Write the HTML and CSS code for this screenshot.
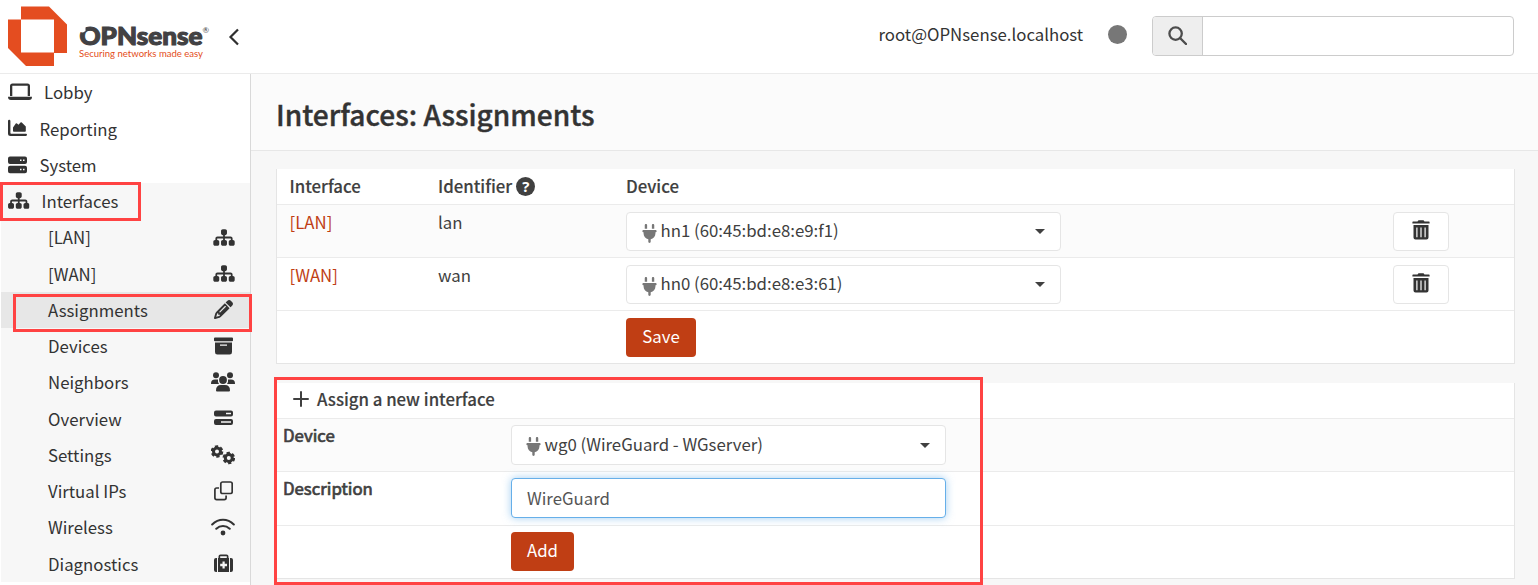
FILE: index.html
```html
<!DOCTYPE html>
<html lang="en">
<head>
<meta charset="utf-8">
<title>Interfaces: Assignments</title>
<link rel="stylesheet" href="styles.css">
</head>
<body>
<svg class="defs" aria-hidden="true">
  <symbol id="sitemap" viewBox="0 0 576 512"><path d="M208 80c0-26.5 21.5-48 48-48h64c26.5 0 48 21.5 48 48v64c0 26.5-21.5 48-48 48h-8v40H464c30.9 0 56 25.1 56 56v32h8c26.5 0 48 21.5 48 48v64c0 26.5-21.5 48-48 48H464c-26.5 0-48-21.5-48-48V368c0-26.5 21.5-48 48-48h8V288c0-4.4-3.6-8-8-8H312v40h8c26.5 0 48 21.5 48 48v64c0 26.5-21.5 48-48 48H256c-26.5 0-48-21.5-48-48V368c0-26.5 21.5-48 48-48h8V280H112c-4.4 0-8 3.6-8 8v32h8c26.5 0 48 21.5 48 48v64c0 26.5-21.5 48-48 48H48c-26.5 0-48-21.5-48-48V368c0-26.5 21.5-48 48-48h8V288c0-30.9 25.1-56 56-56H264V192h-8c-26.5 0-48-21.5-48-48V80z"/></symbol>
  <symbol id="plug" viewBox="0 0 384 512"><path d="M96 0C78.3 0 64 14.3 64 32v96h64V32c0-17.7-14.3-32-32-32zM288 0c-17.7 0-32 14.3-32 32v96h64V32c0-17.7-14.3-32-32-32zM32 160c-17.7 0-32 14.3-32 32s14.3 32 32 32v32c0 77.4 55 142 128 156.800V480c0 17.700 14.300 32 32 32s32-14.300 32-32V412.800C297 398 352 333.400 352 256V224c17.700 0 32-14.300 32-32s-14.300-32-32-32H32z"/></symbol>
  <symbol id="trash" viewBox="0 0 18 20"><path d="M5.500 1.500 6.500 .3h5l1 1.200H17q.6 0 .6.800v1.200H.4V2.300q0-.8.600-.8z"/><path fill-rule="evenodd" d="M1.500 5h15v12.500q0 2-2 2h-11q-2 0-2-2zM4.300 7.500v9.700h1.200V7.500zM8.400 7.500v9.700h1.200V7.500zM12.500 7.500v9.700h1.200V7.500z"/></symbol>
</svg>

<header class="topbar">
  <div class="brand">
    <svg class="logo" width="202" height="60" viewBox="0 0 202 60">
      <path fill="#e44d20" d="M13 .5H41L59 18.500V47H46V60H18L0 42V13.500H13z"/>
      <path fill="#fff" d="M13 13.500H46V46.500H13z"/>
      <text class="logo-name" x="71.500" y="39" textLength="123" lengthAdjust="spacingAndGlyphs">OPNsense</text>
      <path d="M69 19.500h8.500v5.500l-2.500 1.500-6-1z" fill="#fff"/>
      <text class="logo-reg" x="194.500" y="27">®</text>
      <text class="logo-tag" x="71" y="51" textLength="124" lengthAdjust="spacingAndGlyphs">Securing networks made easy</text>
    </svg>
    <svg class="collapse" width="12" height="18" viewBox="0 0 12 18"><path d="M10 1.500 2.500 9l7.500 7.500" fill="none" stroke="#2f2f2f" stroke-width="2.200"/></svg>
  </div>
  <div class="account">
    <span class="user">root@OPNsense.localhost</span>
    <span class="status"></span>
    <div class="search">
      <span class="search-btn"><svg width="19" height="19" viewBox="0 0 19 19"><circle cx="7.600" cy="7.600" r="6.200" fill="none" stroke="#4d4d4d" stroke-width="2.300"/><path d="m12 12 6 6" stroke="#4d4d4d" stroke-width="2.400" stroke-linecap="round"/></svg></span>
      <span class="search-field"></span>
    </div>
  </div>
</header>

<div class="body">
  <nav class="sidebar">
    <a class="item"><svg width="24" height="18" viewBox="0 0 24 18"><path fill-rule="evenodd" d="M2 3q0-2.500 2.500-2.500h15Q22 .5 22 3v10H2zM4.300 2.800V13h15.400V2.800zM0 13.700h24q0 3.300-3 3.300H3q-3 0-3-3.300z"/></svg><span class="gap-lg">Lobby</span></a>
    <a class="item"><svg width="19" height="18" viewBox="0 0 19 18"><path d="M0 2q0-1.200 1.200-1.200T2.400 2v12q0 .7.700.7H18q1 0 1 1.150t-1 1.150H2.500Q0 17 0 14.500zM5 8.500l2.800-4q.6-.6 1.200 0l1.500 1.300 2-2.300q.7-.6 1.300 0L17.800 7.500v4.500q0 .8-.8.800H5.800Q5 12.800 5 12z"/></svg><span class="gap-md">Reporting</span></a>
    <a class="item"><svg width="19" height="18" viewBox="0 0 19 18"><path fill-rule="evenodd" d="M2 .5h15q2 0 2 2V6q0 2-2 2H2Q0 8 0 6V2.500q0-2 2-2zM12 3.500V5h1.500V3.500zm3 0V5h1.500V3.500zM2 9.700h15q2 0 2 2v3.500q0 2-2 2H2q-2 0-2-2v-3.500q0-2 2-2zM12 12.700v1.500h1.500v-1.500zm3 0v1.500h1.500v-1.500z"/></svg><span class="gap-md">System</span></a>
    <a class="item open"><svg width="21.500" height="19" ><use href="#sitemap"/></svg><span class="gap-sm">Interfaces</span></a>
    <div class="submenu">
      <a class="sub"><span>[LAN]</span><svg width="22" height="19"><use href="#sitemap"/></svg></a>
      <a class="sub"><span>[WAN]</span><svg width="22" height="19"><use href="#sitemap"/></svg></a>
      <a class="sub active"><span>Assignments</span><svg class="narrow" width="19" height="19" viewBox="0 0 512 512"><path d="M410.300 231l11.300-11.300-33.900-33.900-62.100-62.100L291.700 89.800l-11.300 11.300-22.600 22.600L58.600 322.900c-10.400 10.400-18 23.300-22.200 37.400L1 480.700c-2.500 8.400-.2 17.500 6.100 23.700s15.300 8.500 23.700 6.100l120.300-35.400c14.100-4.200 27-11.800 37.400-22.200L387.700 253.700 410.300 231zM160 399.400l-9.100 22.700c-4 3.100-8.500 5.400-13.300 6.900L59.400 452l23-78.100c1.400-4.900 3.800-9.400 6.900-13.300l22.700-9.100v32c0 8.800 7.200 16 16 16h32zM362.700 18.700L348.300 33.200 325.700 55.800 314.300 67.100l33.900 33.900 62.100 62.100 33.900 33.900 11.300-11.300 22.600-22.600 14.500-14.500c25-25 25-65.500 0-90.500L453.300 18.700c-25-25-65.500-25-90.500 0zm-47.400 168l-144 144c-6.200 6.200-16.400 6.200-22.600 0s-6.200-16.400 0-22.600l144-144c6.200-6.200 16.400-6.200 22.600 0s6.200 16.400 0 22.600z"/></svg></a>
      <a class="sub"><span>Devices</span><svg class="narrow" width="19" height="18" viewBox="0 0 19 18"><path fill-rule="evenodd" d="M1 .5h17q1 0 1 1v2q0 .8-1 .8H1q-1 0-1-.8v-2q0-1 1-1zM1 5.500h17v9.500q0 2.500-2.300 2.500H3.300Q1 17.500 1 15zM6 7.500v1.300h7V7.500z"/></svg></a>
      <a class="sub"><span>Neighbors</span><svg width="24" height="20" viewBox="0 0 24 20"><circle cx="5" cy="3.300" r="3"/><circle cx="19" cy="3.300" r="3"/><circle cx="12" cy="8" r="3.900"/><path d="M0 11.500Q0 7.500 4 7.500h3Q6.500 10 8 12H.5q-.5 0-.5-.5zM24 11.500Q24 7.500 20 7.500h-3Q17.500 10 16 12h7.500q.5 0 .5-.5zM5 18.500q0-5.500 5-5.500h4q5 0 5 5.500 0 1-1 1H6q-1 0-1-1z"/></svg></a>
      <a class="sub"><span>Overview</span><svg class="narrow" width="19" height="16" viewBox="0 0 19 16"><path fill-rule="evenodd" d="M2 .5h15q2 0 2 2v2q0 2-2 2H2q-2 0-2-2v-2q0-2 2-2zM12 2.700v1.500h5V2.700zM2 9h15q2 0 2 2v2q0 2-2 2H2q-2 0-2-2v-2q0-2 2-2zM7 11.300v1.500h10v-1.500z"/></svg></a>
      <a class="sub"><span>Settings</span><svg width="24" height="20" viewBox="0 0 24 20"><g fill="none" stroke="#333"><circle cx="6" cy="6.500" r="3.500" stroke-width="3"/><circle cx="6" cy="6.500" r="5.100" stroke-width="2.400" stroke-dasharray="3.100 2.241"/><circle cx="17.800" cy="13" r="3.500" stroke-width="3"/><circle cx="17.800" cy="13" r="5.100" stroke-width="2.400" stroke-dasharray="3.100 2.241"/></g></svg></a>
      <a class="sub"><span>Virtual IPs</span><svg class="narrow" width="19" height="20" viewBox="0 0 19 20"><g fill="none" stroke="#333" stroke-width="1.700"><rect x="6.800" y="1" width="11.400" height="11.500" rx="1.800"/><path d="M5 7H2.700Q.9 7 .9 8.800v8Q.9 18.600 2.700 18.600h7.600q1.800 0 1.800-1.800V14.500"/></g></svg></a>
      <a class="sub"><span>Wireless</span><svg width="24" height="18" viewBox="0 0 24 18"><g fill="none" stroke="#333" stroke-width="2.100" stroke-linecap="round"><path d="M1.200 6.500Q6 1.800 12 1.800t10.800 4.700M5.300 10.700Q8.200 8 12 8t6.700 2.700"/></g><circle cx="12" cy="15" r="2.400"/></svg></a>
      <a class="sub"><span>Diagnostics</span><svg class="narrow" width="19" height="19" viewBox="0 0 19 19"><path fill-rule="evenodd" d="M4.500 4V2.500Q4.500.5 6.500.5h6q2 0 2 2V4zM6.200 4h6.600V2.200H6.200zM4 4h11v14H4zM8.500 7.500v2.300H6.200v2.400h2.300v2.300h2.200v-2.300H13V9.800h-2.300V7.500zM3 4v14H2q-2 0-2-2V6q0-2 2-2zM16 4v14h1q2 0 2-2V6q0-2-2-2z"/></svg></a>
    </div>
  </nav>

  <main class="main">
    <div class="page-head"><h1>Interfaces: Assignments</h1></div>
    <div class="content">
      <section class="card">
        <div class="row head"><span>Interface</span><span class="ident">Identifier <i class="help">?</i></span><span>Device</span></div>
        <div class="row tint"><a class="link">[LAN]</a><span>lan</span><div class="select"><svg width="15" height="19"><use href="#plug"/></svg><span>hn1 (60:45:bd:e8:e9:f1)</span><b class="caret"></b></div><span class="del"><svg width="18" height="20"><use href="#trash"/></svg></span></div>
        <div class="row"><a class="link">[WAN]</a><span>wan</span><div class="select"><svg width="15" height="19"><use href="#plug"/></svg><span>hn0 (60:45:bd:e8:e3:61)</span><b class="caret"></b></div><span class="del"><svg width="18" height="20"><use href="#trash"/></svg></span></div>
        <div class="row last"><span></span><span></span><button class="btn save">Save</button></div>
      </section>
      <section class="card form">
        <div class="row head"><svg width="16" height="16" viewBox="0 0 16 16"><path d="M8 1v14M1 8h14" stroke="#404040" stroke-width="2" stroke-linecap="round"/></svg><span class="assign">Assign a new interface</span></div>
        <div class="row tint"><strong>Device</strong><div class="select"><svg width="15" height="19"><use href="#plug"/></svg><span>wg0 (WireGuard - WGserver)</span><b class="caret"></b></div></div>
        <div class="row desc"><strong>Description</strong><div class="input">WireGuard</div></div>
        <div class="row last"><span></span><button class="btn add">Add</button></div>
      </section>
    </div>
  </main>
</div>

<div class="mark mark-menu"></div>
<div class="mark mark-assign"></div>
<div class="mark mark-form"></div>
</body>
</html>
```
FILE: styles.css
```css
* { box-sizing: border-box; }
body {
  margin: 0;
  width: 1538px;
  height: 585px;
  overflow: hidden;
  position: relative;
  background: #fff;
  color: #404040;
  font: 16.8px/24px "Noto Sans CJK SC", "Noto Sans", sans-serif;
}
svg { flex: none; fill: #333; display: block; }
.defs { width: 0; height: 0; position: absolute; }

.topbar {
  height: 74px;
  border-bottom: 1px solid #ebebeb;
  display: flex;
  justify-content: space-between;
}
.brand { display: flex; padding: 6px 0 0 8px; }
.logo { overflow: visible; }
.logo-name { font: 900 24px Lato, sans-serif; fill: #424143; stroke: #424143; stroke-width: 1.1px; }
.logo-reg { font: 8px Lato, sans-serif; fill: #424143; }
.logo-tag { font: 9.500px Lato, sans-serif; fill: #e44d20; }
.collapse { margin: 22px 0 0 18px; }
.account { display: flex; padding: 16px 24px 0 0; }
.user { padding-top: 6px; color: #333; width: 205.500px; }
.status { width: 19px; height: 19px; border-radius: 50%; background: #777; margin: 9px 25px 0 24px; }
.search { display: flex; width: 362px; height: 40px; border: 1px solid #ccc; border-radius: 4px; overflow: hidden; }
.search-btn { width: 50px; background: #eee; border-right: 1px solid #ccc; padding: 9px 0 0 15px; }
.search-field { flex: 1; }

.body { display: flex; height: 511px; }
.sidebar { width: 251px; border-right: 1px solid #d9d9d9; padding-left: 1px; color: #333; }
.item { display: flex; align-items: center; height: 36.250px; padding-left: 7px; }
.item span, .sub span { padding-top: .3px; }
.gap-lg { margin-left: 12px; }
.gap-md { margin-left: 12.500px; }
.gap-sm { margin-left: 12px; }
.open, .submenu { background: #f7f7f7; }
.submenu { height: 363px; }
.sub { display: flex; align-items: center; justify-content: space-between; height: 36.250px; padding: 0 15px 0 47px; }
.sub .narrow { margin-right: 2.500px; }
.active { background: #e7e7e7; }

.main { flex: 1; background: #f7f7f7; }
.page-head { height: 77px; background: #fbfbfb; border-bottom: 1px solid #e7e7e7; padding: 22px 0 0 25px; }
h1 { margin: 0; font-size: 28.100px; line-height: 36px; font-weight: 500; color: #333; -webkit-text-stroke: .4px #333; }
.content { padding: 18px 23px 0 25px; }
.card { height: 195px; background: #fff; border: solid #e5e5e5; border-width: 0 1px 1px; margin-bottom: 19px; }
.row { display: grid; grid-template-columns: 148.500px 188px 767px auto; height: 53px; padding: 5px 0 0 12.500px; border-bottom: 1px solid #ebebeb; align-items: start; justify-content: start; }
.head { height: 36px; font-weight: 500; -webkit-text-stroke: .15px #404040; }
.tint { background: #fbfbfb; }
.last { border: 0; height: 52px; padding-top: 7px; }
.ident { display: flex; align-items: center; gap: 4px; }
.help { width: 19px; height: 19px; border-radius: 50%; background: #404040; color: #fff; font: 700 15px/19px "Noto Sans", sans-serif; text-align: center; -webkit-text-stroke: 0; }
.link { color: #c03e14; }
.select { width: 435px; height: 39px; margin-top: 2px; background: #fff; border: 1px solid #e5e5e5; border-radius: 4px; display: flex; align-items: center; padding: 0 15px 0; }
.select span { padding-bottom: 3px; }
.select svg { fill: #777; margin: 4px 3.500px 0 0; }
.caret { margin-left: auto; border: solid transparent; border-width: 5px 5px 0; border-top-color: #404040; }
.del { width: 56px; height: 39px; margin-top: 2px; background: #fff; border: 1px solid #e5e5e5; border-radius: 4px; padding: 7px 0 0 18px; }
.btn { border: 0; border-radius: 4px; background: #c03e14; color: #fff; height: 39px; font: inherit; padding: 0 0 3px; }
.save { width: 70px; }
.add { width: 63px; }

.form { height: 196px; }
.form .row { grid-template-columns: 228px 435px; padding-left: 6px; padding-top: 6px; }
.form .row.head { display: flex; padding: 4px 0 0 16px; gap: 8px; }
.form .head svg { margin-top: 4px; }
.form .select { height: 40px; margin-top: 0; }
.form .select svg { margin-top: 2px; margin-left: -1px; }
.form strong { font-weight: 400; margin-top: -2px; -webkit-text-stroke: .7px #404040; }
.form .desc { height: 54px; }
.input { height: 40px; border: 1px solid #66afe9; border-radius: 4px; background: #fff; color: #555; padding: 7px 15px; box-shadow: 0 0 8px rgba(102, 175, 233, .6); }

/* highlight frames laid over the page */
.mark { position: absolute; border: 3px solid #ff4343; }
.mark-menu { left: 0; top: 182px; width: 141px; height: 39px; }
.mark-assign { left: 13px; top: 294px; width: 239px; height: 38px; }
.mark-form { left: 274px; top: 377px; width: 709px; height: 208px; }
```
